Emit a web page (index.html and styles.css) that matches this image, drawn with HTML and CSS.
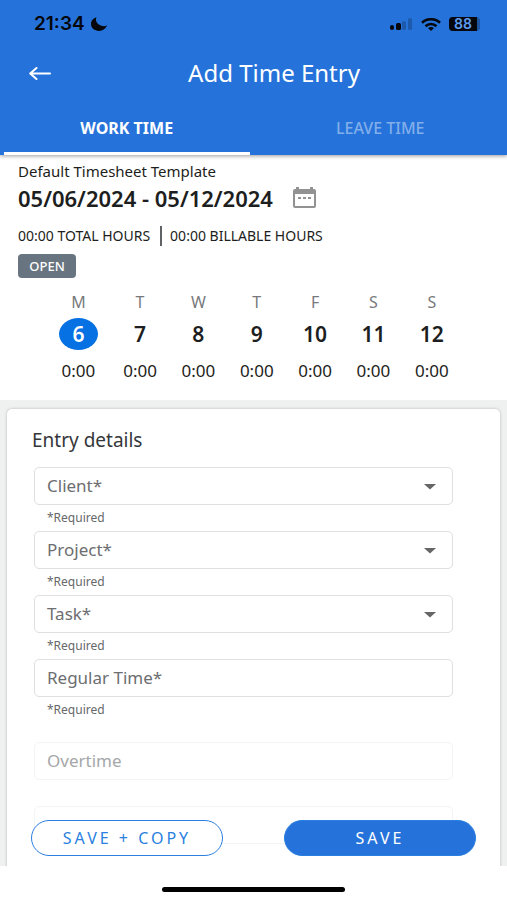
FILE: index.html
```html
<!DOCTYPE html>
<html lang="en">
<head>
<meta charset="utf-8">
<meta name="viewport" content="width=device-width, initial-scale=1">
<title>Add Time Entry</title>
<link rel="stylesheet" href="styles.css">
</head>
<body>
<div class="screen">
  <header class="top">
    <div class="status">
      <span class="clock">21:34</span>
      <svg class="moon" width="16" height="14" viewBox="0 0 16 14" aria-hidden="true"><path d="M5.500.2C2.200 1 0 3.700 0 7c0 3.900 3.600 6.900 8 6.900 3.700 0 6.900-2.200 8-5.600-1.500.8-3 1-4.600.7C8 8.500 5.600 6.300 5 3.600 4.800 2.300 5 1.200 5.500.2z"/></svg>
      <div class="indicators">
        <svg width="23" height="12" viewBox="0 0 23 12" aria-hidden="true"><rect x="0" y="7" width="4" height="5" rx="2"/><rect x="6" y="5" width="5" height="7" rx="1.500"/><g opacity=".22"><rect x="12" y="3" width="4" height="9" rx="1.500"/><rect x="18" y="0" width="4" height="12" rx="1.500"/></g></svg>
        <svg width="20" height="13" viewBox="0 0 20 13" aria-hidden="true"><g fill="none" stroke="#05070c" stroke-width="2.600"><path d="M1 4.800C6 .1 14 .1 19 4.800"/><path d="M4.500 8.200C7.500 5.300 12.500 5.300 15.500 8.200"/></g><path d="M7 10c1.700-1.500 4.300-1.500 6 0L10 12.900z"/></svg>
        <span class="battery"><span class="level">88</span></span>
      </div>
    </div>
    <div class="bar">
      <button class="back" type="button" aria-label="Back"><svg width="22" height="13" viewBox="0 0 22 13" fill="none" stroke="#fff" stroke-width="2" stroke-linecap="round" stroke-linejoin="round" aria-hidden="true"><path d="M21 6.500H1.500M7.500 1 1.200 6.500 7.500 12"/></svg></button>
      <h1>Add Time Entry</h1>
    </div>
    <nav class="tabs">
      <a class="tab active" href="#work">WORK TIME</a>
      <a class="tab" href="#leave">LEAVE TIME</a>
    </nav>
  </header>

  <section class="summary">
    <p class="template">Default Timesheet Template</p>
    <div class="period">
      <h2>05/06/2024 - 05/12/2024</h2>
      <button class="calendar" type="button" aria-label="Choose period"><svg width="23" height="21" viewBox="0 0 23 21" aria-hidden="true"><path fill="#929292" fill-rule="evenodd" d="M3 0h3v2h11V0h3v2h1q2 0 2 2v15q0 2-2 2H2q-2 0-2-2V4q0-2 2-2h1zM2 7v12h19V7z"/><path fill="#929292" d="M5 10h3v2H5zM10 10h3v2h-3zM15 10h3v2h-3z"/></svg></button>
    </div>
    <div class="totals"><span>00:00 TOTAL HOURS</span><span class="billable">00:00 BILLABLE HOURS</span></div>
    <span class="state">OPEN</span>
    <div class="week">
      <button class="day selected" type="button"><span class="name">M</span><span class="date">6</span><span class="hours">0:00</span></button>
      <button class="day" type="button"><span class="name">T</span><span class="date">7</span><span class="hours">0:00</span></button>
      <button class="day" type="button"><span class="name">W</span><span class="date">8</span><span class="hours">0:00</span></button>
      <button class="day" type="button"><span class="name">T</span><span class="date">9</span><span class="hours">0:00</span></button>
      <button class="day" type="button"><span class="name">F</span><span class="date">10</span><span class="hours">0:00</span></button>
      <button class="day" type="button"><span class="name">S</span><span class="date">11</span><span class="hours">0:00</span></button>
      <button class="day" type="button"><span class="name">S</span><span class="date">12</span><span class="hours">0:00</span></button>
    </div>
  </section>

  <main class="content">
    <form class="card">
      <h3>Entry details</h3>
      <div class="field">
        <div class="box"><select id="client" required><option value=""></option></select><label for="client">Client*</label><svg class="caret" width="12" height="8" viewBox="0 0 12 8" aria-hidden="true"><path d="M0 2h12L6 7.500z"/></svg></div>
        <p class="hint">*Required</p>
      </div>
      <div class="field">
        <div class="box"><select id="project" required><option value=""></option></select><label for="project">Project*</label><svg class="caret" width="12" height="8" viewBox="0 0 12 8" aria-hidden="true"><path d="M0 2h12L6 7.500z"/></svg></div>
        <p class="hint">*Required</p>
      </div>
      <div class="field">
        <div class="box"><select id="task" required><option value=""></option></select><label for="task">Task*</label><svg class="caret" width="12" height="8" viewBox="0 0 12 8" aria-hidden="true"><path d="M0 2h12L6 7.500z"/></svg></div>
        <p class="hint">*Required</p>
      </div>
      <div class="field last-required">
        <div class="box"><input id="regular" type="text" required><label for="regular">Regular Time*</label></div>
        <p class="hint">*Required</p>
      </div>
      <div class="field optional">
        <div class="box"><input id="overtime" type="text" disabled><label for="overtime">Overtime</label></div>
      </div>
      <div class="field optional">
        <div class="box"><input type="text" aria-label="Additional time" disabled></div>
      </div>
    </form>
    <div class="actions">
      <button class="action outline" type="button">SAVE + COPY</button>
      <button class="action solid" type="button">SAVE</button>
    </div>
  </main>
  <footer class="home"><span class="home-line"></span></footer>
</div>
</body>
</html>
```
FILE: styles.css
```css
* { box-sizing: border-box; }

body {
  margin: 0;
  background: #fff;
  color: #1d1e20;
  font-family: "Noto Sans", "Open Sans", sans-serif;
}

h1, h2, h3, p { margin: 0; }

button {
  border: 0;
  padding: 0;
  background: none;
  color: inherit;
  font: inherit;
}

svg { display: block; flex: none; }

.screen {
  display: flex;
  flex-direction: column;
  height: 100vh;
}

.top {
  position: relative;
  z-index: 1;
  flex: none;
  background: #2573da;
  color: #fff;
  box-shadow: 0 1px 4px rgba(0, 0, 0, 0.4);
}

.status {
  display: flex;
  align-items: center;
  height: 48px;
  padding: 0 27px 0 34px;
  color: #05070c;
  fill: #05070c;
}

.clock {
  margin-right: 6px;
  font: 600 19px/24px Inter, sans-serif;
}

.indicators {
  display: flex;
  align-items: center;
  gap: 8px;
  margin-left: auto;
}

.battery {
  padding-right: 3px;
  border-radius: 4px;
  background: #1d57a3;
}

.level {
  display: block;
  width: 28px;
  border-radius: 4px 0 0 4px;
  background: #05070c;
  color: #5e9cf0;
  font: 600 14px/14px Inter, sans-serif;
  text-align: center;
}

.bar {
  display: grid;
  grid-template-columns: 44px 1fr 44px;
  align-items: center;
  height: 50px;
  padding: 0 20px 0 18px;
}

.back { display: grid; place-items: center; height: 44px; }

h1 {
  padding-left: 43px;
  font-size: 24px;
  font-weight: 400;
  line-height: 32px;
  text-align: center;
}

.tabs {
  display: grid;
  grid-template-columns: 1fr 1fr;
  gap: 8px;
  padding: 0 4px;
}

.tab {
  height: 57px;
  border-bottom: 3px solid transparent;
  color: #82aeea;
  font-size: 16px;
  font-weight: 500;
  line-height: 60px;
  text-align: center;
  text-decoration: none;
}

.tab.active {
  border-color: #fff;
  color: #fff;
  font-weight: 700;
}

.summary {
  position: relative;
  flex: none;
  padding: 6px 0 18px 18px;
  background: #fff;
  box-shadow: 0 1px 3px rgba(0, 0, 0, 0.25);
}

.template { font-size: 15px; line-height: 21px; }

.period { display: flex; gap: 20px; height: 32px; }

.calendar { display: grid; place-items: center; height: 30px; }

h2 {
  font-size: 22px;
  font-weight: 600;
  line-height: 32px;
}

.totals {
  display: flex;
  margin-top: 12px;
  font-size: 14px;
  line-height: 20px;
}

.billable {
  margin-left: 10px;
  padding-left: 8px;
  border-left: 2px solid #606366;
}

.state {
  display: block;
  width: 58px;
  margin-top: 8px;
  border-radius: 4px;
  background: #68747f;
  color: #fff;
  font-size: 13px;
  font-weight: 500;
  line-height: 24px;
  text-align: center;
}

.week {
  display: grid;
  grid-template-columns: 10fr repeat(6, 9fr);
  margin: 13px 46px 0 28px;
}

.day { display: grid; justify-items: center; }

.name { color: #77797c; font-size: 16px; line-height: 22px; }

.date {
  min-width: 39px;
  margin: 5px 0;
  border-radius: 50%;
  font-size: 21px;
  font-weight: 600;
  line-height: 32px;
}

.selected .date { background: #0671e3; color: #fff; }

.hours { margin-top: 5px; font-size: 17px; line-height: 22px; }

.content {
  position: relative;
  flex: 1;
  min-height: 0;
  overflow: hidden;
  padding: 9px 7px 0;
  background: #eff1f1;
}

.card {
  padding: 18px 47px 24px 27px;
  border-radius: 5px;
  background: #fff;
  box-shadow: 0 0 3px rgba(0, 0, 0, 0.25);
}

h3 {
  margin: 0 0 14px -2px;
  color: #35373a;
  font-size: 19px;
  font-weight: 400;
  line-height: 26px;
}

.box { display: grid; align-items: center; }

.box > * { grid-area: 1 / 1; }

.box select,
.box input {
  appearance: none;
  width: 100%;
  height: 38px;
  margin: 0;
  padding: 0 12px;
  border: 1px solid #dedfdf;
  border-radius: 5px;
  background: #fff;
  font: inherit;
}

.box label {
  padding-left: 13px;
  color: #6c6e70;
  font-size: 17px;
  line-height: 24px;
  pointer-events: none;
}

.caret {
  justify-self: end;
  margin-right: 17px;
  fill: #666;
  pointer-events: none;
}

.hint {
  padding: 3px 0 3px 13px;
  color: #66686a;
  font-size: 12px;
  line-height: 20px;
}

.last-required { margin-bottom: 19px; }

.optional { margin-bottom: 26px; }

.optional .box input { border-color: #f3f4f4; }

.optional .box label { color: #a5a7a9; }

.actions {
  position: absolute;
  right: 31px;
  bottom: 10px;
  left: 31px;
  display: flex;
  justify-content: space-between;
  gap: 24px;
}

.action {
  flex: 0 1 192px;
  height: 36px;
  border: 1px solid #2a7fe0;
  border-radius: 24px;
  font-size: 16px;
  letter-spacing: 3px;
}

.outline { background: #fff; color: #2a7fe0; }

.solid { background: #2573da; color: #fff; }

.home {
  display: grid;
  place-items: center;
  flex: none;
  height: 34px;
  padding-top: 12px;
}

.home-line {
  width: 36%;
  height: 5px;
  border-radius: 3px;
  background: #000;
}
```
